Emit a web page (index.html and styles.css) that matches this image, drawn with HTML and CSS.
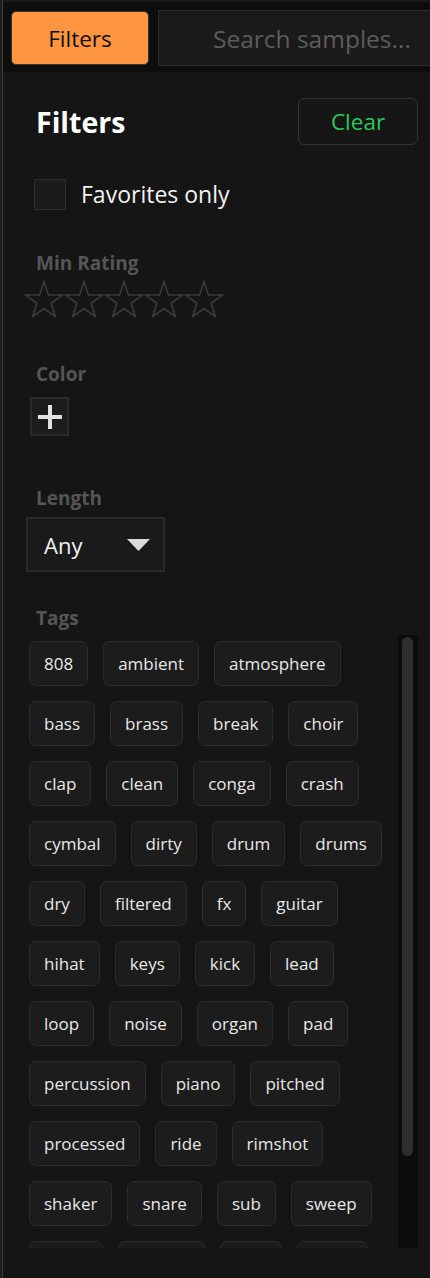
FILE: index.html
```html
<!DOCTYPE html>
<html lang="en">
<head>
<meta charset="utf-8">
<title>Filters</title>
<link rel="stylesheet" href="styles.css">
</head>
<body>
<div class="app">
  <div class="edge"></div>
  <div class="main">
    <header class="topbar">
      <button class="btn-filters">Filters</button>
      <div class="search"><span class="placeholder">Search samples...</span></div>
    </header>
    <section class="panel">
      <div class="panel-head">
        <h2 class="title">Filters</h2>
        <button class="btn-clear">Clear</button>
      </div>
      <div class="fav">
        <span class="checkbox"></span>
        <span class="fav-text">Favorites only</span>
      </div>

      <div class="label label-rating">Min Rating</div>
      <div class="stars">
        <svg class="star" viewBox="0 0 40 38" width="40" height="38"><polygon points="20,1.7 24.41,14.93 38.36,15.04 27.13,23.32 31.34,36.61 20,28.5 8.66,36.61 12.87,23.32 1.64,15.04 15.59,14.93"/></svg>
        <svg class="star" viewBox="0 0 40 38" width="40" height="38"><polygon points="20,1.7 24.41,14.93 38.36,15.04 27.13,23.32 31.34,36.61 20,28.5 8.66,36.61 12.87,23.32 1.64,15.04 15.59,14.93"/></svg>
        <svg class="star" viewBox="0 0 40 38" width="40" height="38"><polygon points="20,1.7 24.41,14.93 38.36,15.04 27.13,23.32 31.34,36.61 20,28.5 8.66,36.61 12.87,23.32 1.64,15.04 15.59,14.93"/></svg>
        <svg class="star" viewBox="0 0 40 38" width="40" height="38"><polygon points="20,1.7 24.41,14.93 38.36,15.04 27.13,23.32 31.34,36.61 20,28.5 8.66,36.61 12.87,23.32 1.64,15.04 15.59,14.93"/></svg>
        <svg class="star" viewBox="0 0 40 38" width="40" height="38"><polygon points="20,1.7 24.41,14.93 38.36,15.04 27.13,23.32 31.34,36.61 20,28.5 8.66,36.61 12.87,23.32 1.64,15.04 15.59,14.93"/></svg>
      </div>

      <div class="label label-color">Color</div>
      <button class="btn-plus" aria-label="Add color">
        <svg viewBox="0 0 24 24" width="24" height="24"><rect x="0" y="10" width="24" height="4"/><rect x="10" y="0" width="4" height="24"/></svg>
      </button>

      <div class="label label-length">Length</div>
      <div class="select">
        <span class="select-value">Any</span>
        <svg class="caret" viewBox="0 0 23 12" width="23" height="12"><polygon points="0,0 23,0 11.5,12"/></svg>
      </div>

      <div class="label label-tags">Tags</div>
      <div class="tags-area">
        <div class="tags">
          <span class="tag">808</span>
          <span class="tag">ambient</span>
          <span class="tag">atmosphere</span>
          <span class="tag">bass</span>
          <span class="tag">brass</span>
          <span class="tag">break</span>
          <span class="tag">choir</span>
          <span class="tag">clap</span>
          <span class="tag">clean</span>
          <span class="tag">conga</span>
          <span class="tag">crash</span>
          <span class="tag">cymbal</span>
          <span class="tag">dirty</span>
          <span class="tag">drum</span>
          <span class="tag">drums</span>
          <span class="tag">dry</span>
          <span class="tag">filtered</span>
          <span class="tag">fx</span>
          <span class="tag">guitar</span>
          <span class="tag">hihat</span>
          <span class="tag">keys</span>
          <span class="tag">kick</span>
          <span class="tag">lead</span>
          <span class="tag">loop</span>
          <span class="tag">noise</span>
          <span class="tag">organ</span>
          <span class="tag">pad</span>
          <span class="tag">percussion</span>
          <span class="tag">piano</span>
          <span class="tag">pitched</span>
          <span class="tag">processed</span>
          <span class="tag">ride</span>
          <span class="tag">rimshot</span>
          <span class="tag">shaker</span>
          <span class="tag">snare</span>
          <span class="tag">sub</span>
          <span class="tag">sweep</span>
          <span class="tag">synth</span>
          <span class="tag">texture</span>
          <span class="tag">tom</span>
          <span class="tag">vocal</span>
        </div>
        <div class="scroll-track"><div class="scroll-thumb"></div></div>
      </div>
    </section>
  </div>
</div>
</body>
</html>
```

FILE: styles.css
```css
* {
  box-sizing: border-box;
}

html, body {
  margin: 0;
  padding: 0;
  background: #151515;
  height: 1278px;
  overflow: hidden;
}

body {
  font-family: "Open Sans", "DejaVu Sans", sans-serif;
  color: #e6e6e6;
}

.app {
  display: flex;
  height: 1278px;
  width: 430px;
  overflow: hidden;
}

.edge {
  width: 3px;
  flex: 0 0 3px;
  background: #1d1f16;
  border-right: 1px solid #3c3c3c;
}

.main {
  flex: 1;
  min-width: 0;
  display: flex;
  flex-direction: column;
}

/* top bar */
.topbar {
  height: 72px;
  flex: 0 0 72px;
  background: #0d0d0d;
  border-top: 2px solid #1a1a1a;
  display: flex;
  align-items: flex-start;
  padding: 8px 0 0 8px;
  gap: 9px;
}

.btn-filters {
  width: 138px;
  height: 54px;
  margin-top: 1px;
  flex: 0 0 138px;
  background: #fc9440;
  border: 1px solid #343434;
  border-radius: 5px;
  color: #111;
  font-family: "Open Sans", sans-serif;
  font-size: 22.5px;
  padding: 0;
}

.search {
  flex: 1;
  min-width: 0;
  height: 56px;
  background: #1a1a1a;
  border: 1px solid #2d2d2d;
  border-right: none;
  display: flex;
  align-items: center;
  padding-left: 54px;
  overflow: hidden;
}

.placeholder {
  font-size: 24.5px;
  color: #5c5c5c;
  white-space: nowrap;
}

/* panel */
.panel {
  flex: 1;
  background: #151515;
  padding: 26px 12px 0 23px;
  display: flex;
  flex-direction: column;
  align-items: flex-start;
}

.panel-head {
  align-self: stretch;
  height: 47px;
  display: flex;
  align-items: center;
  justify-content: space-between;
}

.title {
  margin: 0 0 0 10px;
  font-size: 28.5px;
  line-height: 40px;
  font-weight: 700;
  color: #ffffff;
}

.btn-clear {
  width: 120px;
  height: 47px;
  background: #161616;
  border: 1px solid #333333;
  border-radius: 6px;
  color: #2ec85a;
  font-family: "Open Sans", sans-serif;
  font-size: 22.5px;
  padding: 0;
}

.fav {
  margin-top: 33px;
  margin-left: 8px;
  height: 32px;
  display: flex;
  align-items: center;
  gap: 15px;
}

.checkbox {
  width: 32px;
  height: 31px;
  background: #1b1b1b;
  border: 1px solid #2e2e2e;
}

.fav-text {
  font-size: 23px;
  line-height: 30px;
  color: #f2f2f2;
}

.label {
  margin-left: 10px;
  font-size: 19px;
  line-height: 26px;
  font-weight: 700;
  color: #555555;
}

.label-rating {
  margin-top: 40px;
}

.stars {
  margin-top: 4px;
  margin-left: -2px;
  display: flex;
}

.star {
  display: block;
  fill: none;
  stroke: #3b3b3b;
  stroke-width: 1.6;
}

.label-color {
  margin-top: 43px;
}

.btn-plus {
  margin-top: 10px;
  margin-left: 4px;
  width: 39px;
  height: 39px;
  background: #1c1c1c;
  border: 2px solid #2a2a2a;
  padding: 0;
  display: flex;
  align-items: center;
  justify-content: center;
}

.btn-plus svg {
  display: block;
  fill: #e2e2e2;
}

.label-length {
  margin-top: 49px;
}

.select {
  margin-top: 6px;
  width: 139px;
  height: 55px;
  background: #1a1a1a;
  border: 2px solid #2a2a2a;
  display: flex;
  align-items: center;
  justify-content: space-between;
  padding: 0 13px 0 16px;
}

.select-value {
  font-size: 22px;
  color: #f2f2f2;
}

.caret {
  display: block;
  fill: #dcdcdc;
}

.label-tags {
  margin-top: 33px;
}

.tags-area {
  margin-top: 4px;
  margin-left: 3px;
  height: 613px;
  display: flex;
  gap: 3px;
  align-self: stretch;
}

.tags {
  width: 366px;
  height: 613px;
  overflow: hidden;
  padding-top: 6px;
  display: flex;
  flex-wrap: wrap;
  align-content: flex-start;
  gap: 15px;
}

.tag {
  height: 45px;
  padding: 0 14px;
  display: flex;
  align-items: center;
  background: #1c1c1c;
  border: 1px solid #2c2c2c;
  border-radius: 7px;
  font-size: 17px;
  color: #e8e8e8;
  white-space: nowrap;
}

.scroll-track {
  width: 20px;
  height: 613px;
  background: #0c0c0c;
  padding: 2px 0 0 4px;
}

.scroll-thumb {
  width: 11px;
  height: 519px;
  background: #2e2e2e;
  border-radius: 6px;
}
```
